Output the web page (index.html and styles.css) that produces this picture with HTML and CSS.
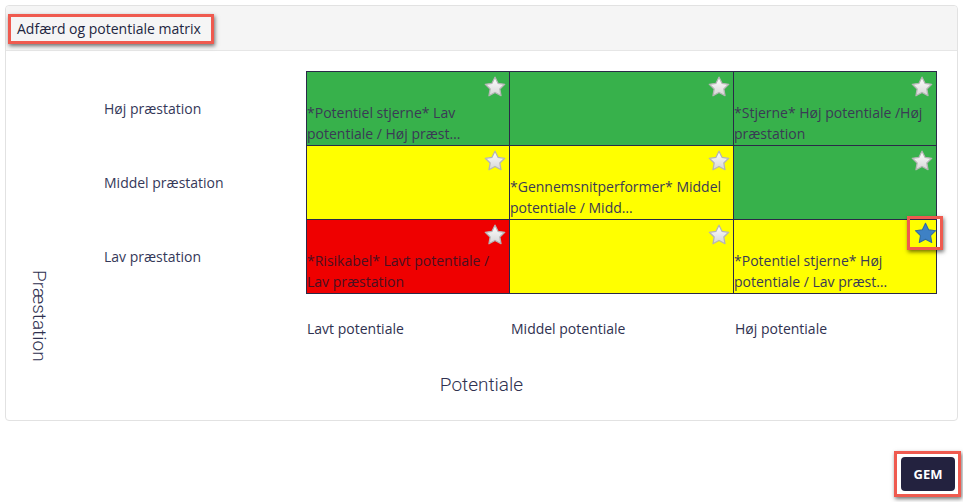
FILE: index.html
```html
<!DOCTYPE html>
<html lang="da">
<head>
<meta charset="utf-8">
<title>Adfærd og potentiale matrix</title>
<link rel="stylesheet" href="styles.css">
</head>
<body>
<svg width="0" height="0" class="defs" aria-hidden="true">
  <defs>
    <linearGradient id="starGrad" x1="0" y1="0" x2="0" y2="1">
      <stop offset="0" stop-color="#ffffff"/>
      <stop offset="1" stop-color="#d6d6d6"/>
    </linearGradient>
    <symbol id="star" viewBox="0 0 24 24">
      <path d="M12 2.2l3 6.1 6.7 1-4.85 4.7 1.15 6.7L12 17.5l-6 3.2 1.15-6.7L2.3 9.3l6.7-1z"/>
    </symbol>
  </defs>
</svg>
<div class="page">
  <section class="card">
    <header class="card-header">
      <span class="title mark-box">Adfærd og potentiale matrix</span>
    </header>
    <div class="card-body">
      <div class="y-axis">Præstation</div>
      <div class="row-labels">
        <div class="row-label">Høj præstation</div>
        <div class="row-label">Middel præstation</div>
        <div class="row-label">Lav præstation</div>
      </div>
      <div class="matrix">
        <div class="cell green"><svg class="star"><use href="#star"/></svg><div class="txt">*Potentiel stjerne* Lav potentiale / Høj præst…</div></div>
        <div class="cell green"><svg class="star"><use href="#star"/></svg><div class="txt"></div></div>
        <div class="cell green"><svg class="star"><use href="#star"/></svg><div class="txt">*Stjerne* Høj potentiale /Høj præstation</div></div>
        <div class="cell yellow"><svg class="star"><use href="#star"/></svg><div class="txt"></div></div>
        <div class="cell yellow"><svg class="star"><use href="#star"/></svg><div class="txt">*Gennemsnitperformer* Middel potentiale / Midd…</div></div>
        <div class="cell green"><svg class="star"><use href="#star"/></svg><div class="txt"></div></div>
        <div class="cell red"><svg class="star"><use href="#star"/></svg><div class="txt">*Risikabel* Lavt potentiale / Lav præstation</div></div>
        <div class="cell yellow"><svg class="star"><use href="#star"/></svg><div class="txt"></div></div>
        <div class="cell yellow"><span class="star-mark mark-box"><svg class="star blue"><use href="#star"/></svg></span><div class="txt">*Potentiel stjerne* Høj potentiale / Lav præst…</div></div>
      </div>
      <div class="col-labels">
        <div>Lavt potentiale</div>
        <div>Middel potentiale</div>
        <div>Høj potentiale</div>
      </div>
      <div class="x-axis">Potentiale</div>
    </div>
  </section>
  <div class="footer">
    <span class="btn-mark mark-box"><button class="btn" type="button">GEM</button></span>
  </div>
</div>
</body>
</html>
```
FILE: styles.css
```css
html, body {
  margin: 0;
  padding: 0;
  background: #ffffff;
}
body {
  font-family: "Open Sans", "Liberation Sans", sans-serif;
  font-size: 14px;
  color: #2f3150;
}
.defs {
  position: absolute;
  width: 0;
  height: 0;
}
.page {
  padding: 5px;
}
.card {
  border: 1px solid #e2e2e2;
  border-radius: 4px;
  background: #fff;
}
.card-header {
  height: 44px;
  background: #f5f5f5;
  border-bottom: 1px solid #e6e6e6;
  border-radius: 4px 4px 0 0;
  display: flex;
  align-items: flex-start;
  padding-left: 2px;
}
.mark-box {
  border: 3px solid #ef5a4f;
  box-shadow: 1px 2px 4px rgba(0, 0, 0, 0.55);
}
.title {
  margin-top: 8px;
  height: 24px;
  line-height: 24px;
  padding: 0 10px 0 6px;
  color: #22263f;
  font-size: 14px;
}
.card-body {
  padding: 20px 0 22px 0;
  display: grid;
  grid-template-columns: 98px 202px 631px 1fr;
  grid-template-rows: 223px auto auto;
}
.y-axis {
  grid-column: 1;
  grid-row: 1 / span 3;
  writing-mode: vertical-rl;
  font-family: Roboto, "Liberation Sans", sans-serif;
  font-weight: 300;
  font-size: 19px;
  line-height: 18px;
  color: #2f3150;
  margin-left: 24px;
  margin-top: 199px;
  align-self: start;
  justify-self: start;
}
.row-labels {
  grid-column: 2;
  grid-row: 1;
  display: flex;
  flex-direction: column;
}
.row-label {
  height: 74px;
  display: flex;
  align-items: center;
  line-height: 20px;
  padding-top: 2px;
  box-sizing: border-box;
  color: #353859;
}
.matrix {
  grid-column: 3;
  grid-row: 1;
  align-self: start;
  display: grid;
  grid-template-columns: 202px 223px 202px;
  grid-template-rows: repeat(3, 73px);
  gap: 1px;
  padding: 1px;
  background: #2a2a48;
  width: 631px;
  height: 223px;
  box-sizing: border-box;
}
.cell {
  position: relative;
  display: flex;
  flex-direction: column;
  justify-content: flex-end;
}
.green { background: #37b14b; }
.yellow { background: #ffff00; }
.red { background: #ef0000; }
.txt {
  font-size: 14px;
  line-height: 21px;
  color: #3a3a55;
  margin-bottom: 1px;
}
.red .txt {
  color: #4a1020;
}
.star {
  position: absolute;
  top: 3px;
  right: 2px;
  width: 24px;
  height: 24px;
  fill: url(#starGrad);
  stroke: #b5b5b5;
  stroke-width: 1.3;
  stroke-linejoin: round;
}
.star-mark {
  position: absolute;
  top: -4px;
  right: -7px;
  width: 30px;
  height: 28px;
  display: flex;
  align-items: center;
  justify-content: center;
}
.star.blue {
  position: static;
  width: 25px;
  height: 25px;
  fill: #3e81c5;
  stroke: #2f6aa5;
  stroke-width: 1;
}
.col-labels {
  grid-column: 3;
  grid-row: 2;
  display: grid;
  grid-template-columns: 204px 224px 203px;
  padding-left: 1px;
  margin-top: 25px;
  line-height: 20px;
  color: #2f3150;
}
.x-axis {
  grid-column: 1 / -1;
  grid-row: 3;
  margin-top: 33px;
  text-align: center;
  font-family: Roboto, "Liberation Sans", sans-serif;
  font-weight: 300;
  font-size: 19px;
  line-height: 26px;
  color: #2f3150;
}
.footer {
  display: flex;
  justify-content: flex-end;
  margin-top: 30px;
  margin-right: -3px;
}
.btn-mark {
  display: inline-flex;
  padding: 3px 3px 3px 4px;
}
.btn {
  height: 34px;
  width: 54px;
  border: none;
  border-radius: 4px;
  background: #23223f;
  color: #ffffff;
  font-family: "Open Sans", "Liberation Sans", sans-serif;
  font-weight: 700;
  font-size: 13px;
  padding: 0;
  cursor: pointer;
}
```
